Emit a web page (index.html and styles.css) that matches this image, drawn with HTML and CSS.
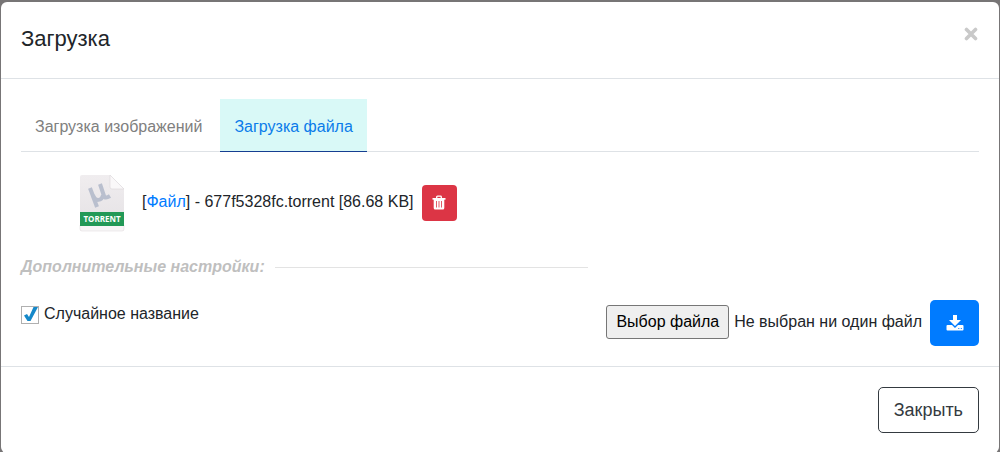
FILE: index.html
```html
<!DOCTYPE html>
<html lang="ru">
<head>
<meta charset="utf-8">
<title>Загрузка</title>
<link rel="stylesheet" href="styles.css">
</head>
<body>
<div class="modal" role="dialog" aria-labelledby="modal-title">
  <header class="modal-header">
    <h1 class="modal-title" id="modal-title">Загрузка</h1>
    <button class="dismiss" type="button" aria-label="Закрыть окно">
      <svg width="14" height="14" viewBox="0 0 14 14"><path d="M2.500 2.500l9 9M11.500 2.500l-9 9" fill="none" stroke="#c9c9c9" stroke-width="3.600" stroke-linecap="round"/></svg>
    </button>
  </header>
  <main class="modal-body">
    <nav class="tabs">
      <a class="tab" href="#images">Загрузка изображений</a>
      <a class="tab tab-active" href="#files" aria-current="page">Загрузка файла</a>
    </nav>
    <div class="file-row">
      <svg class="file-icon" width="48" height="60" viewBox="0 0 48 60" role="img" aria-label="torrent">
        <defs>
          <linearGradient id="paper" x1="0" y1="0" x2="0" y2="1"><stop offset="0" stop-color="#f0edef"/><stop offset="1" stop-color="#e4e1e4"/></linearGradient>
        </defs>
        <path d="M4 2h28l14 14v40q0 2-2 2H4q-2 0-2-2V4q0-2 2-2z" fill="url(#paper)"/>
        <path d="M2 52h44v4q0 2-2 2H4q-2 0-2-2z" fill="#f8f6f7" stroke="#e6e2e4" stroke-width=".7"/>
        <path d="M32 2l14 14H34q-2 0-2-2z" fill="#faf8f9" stroke="#dedadd" stroke-width=".7"/>
        <g fill="none" stroke="#b9bfce">
          <path d="M12 15l7 19" stroke-width="4"/>
          <path d="M15 22c2 7 9 6 10 0" stroke-width="4"/>
          <path d="M22 11l4 12q1 3 6 0" stroke-width="4"/>
        </g>
        <rect x="2" y="39" width="44" height="14" fill="#239957"/>
        <text class="file-icon-label" x="24" y="49" text-anchor="middle">TORRENT</text>
      </svg>
      <span class="file-name">[<a class="link" href="#file">Файл</a>] - 677f5328fc.torrent [86.68 KB]</span>
      <button class="button button-delete" type="button" aria-label="Удалить">
        <svg width="14" height="16" viewBox="0 0 14 16"><path d="M4.700 3V2q0-.8.8-.8h3q.8 0 .8.8v1" fill="none" stroke="#fff" stroke-width="1.300"/><path d="M.5 3h13v1.700H.5z" fill="#fff"/><path fill="#fff" fill-rule="evenodd" d="M1.700 4h10.600v9q0 1.500-1.500 1.500H3.200q-1.500 0-1.500-1.500zM4 6v6.500h.8V6zM6.600 6v6.500h.8V6zM9.200 6v6.500h.8V6z"/></svg>
      </button>
    </div>
    <div class="settings-heading"><h2 class="settings-title">Дополнительные настройки:</h2></div>
    <div class="controls">
      <label class="option"><input class="checkbox" type="checkbox" checked><span>Случайное название</span></label>
      <div class="upload">
        <input class="file-input" type="file" id="upload-file">
        <label class="file-button" for="upload-file">Выбор файла</label>
        <span class="file-status">Не выбран ни один файл</span>
        <button class="button button-upload" type="button" aria-label="Загрузить">
          <svg width="18" height="18" viewBox="0 0 18 18"><path fill="#fff" d="M7 1h4v5h4l-6 6-6-6h4z"/><path fill="#fff" fill-rule="evenodd" d="M1.500 11H6l3 3 3-3h4.500q1 0 1 1v3.500q0 1-1 1h-15q-1 0-1-1V12q0-1 1-1zM12.300 14v1h1v-1zM14.800 14v1h1v-1z"/></svg>
        </button>
      </div>
    </div>
  </main>
  <footer class="modal-footer">
    <button class="button button-close" type="button">Закрыть</button>
  </footer>
</div>
</body>
</html>
```
FILE: styles.css
```css
* { box-sizing: border-box; }

body {
  margin: 0;
  padding: 2px 1px 0;
  background: #777576;
  color: #212529;
  font: 16px/24px "Liberation Sans", Arial, sans-serif;
}

.modal {
  background: #fff;
  border-radius: 6px;
}

.modal-header {
  display: flex;
  align-items: flex-start;
  justify-content: space-between;
  padding: 20px 20px 22px;
  border-bottom: 1px solid #dee2e6;
}

.modal-title {
  margin: 0;
  font-size: 22px;
  line-height: 34px;
  font-weight: 400;
}

.dismiss {
  display: flex;
  margin: 5px 1px 0 0;
  padding: 0;
  border: 0;
  background: none;
}

.modal-body { padding: 20px; }

.tabs {
  display: flex;
  gap: 4px;
  border-bottom: 1px solid #dee2e6;
}

.tab {
  margin-bottom: -1px;
  padding: 16px 14px 12px;
  border-bottom: 1px solid transparent;
  color: #808080;
  text-decoration: none;
}

.tab-active {
  background: #d9f9f7;
  border-bottom-color: #153e91;
  color: #0b7cea;
}

.file-row {
  display: flex;
  align-items: center;
  padding: 21px 0 0 57px;
}

.file-icon { margin-right: 16px; }

.file-icon-label {
  fill: #fff;
  font: 700 8px "Open Sans", sans-serif;
}

.file-name { margin-right: 8px; padding-bottom: 2px; }

.link { color: #007bff; text-decoration: none; }

.button {
  display: inline-flex;
  align-items: center;
  justify-content: center;
  border: 0;
  border-radius: 5px;
  font: inherit;
}

.button-delete {
  width: 35px;
  height: 36px;
  padding: 0;
  border-radius: 4px;
  background: #dc3545;
}

.settings-heading {
  display: flex;
  align-items: center;
  gap: 10px;
  width: calc(60% - 8px);
  margin-top: 22px;
}

.settings-heading::after {
  content: "";
  flex: 1;
  border-top: 1px solid #e3e3e3;
}

.settings-title {
  margin: 0;
  color: #bfbfbf;
  font-size: 16px;
  line-height: 24px;
  font-style: italic;
}

.controls {
  display: flex;
  align-items: flex-start;
  justify-content: space-between;
  margin-top: 21px;
}

.option {
  display: flex;
  align-items: center;
  gap: 5px;
  padding-top: 2px;
}

.checkbox {
  appearance: none;
  width: 18px;
  height: 18px;
  margin: 2px 0 0;
  border: 1px solid #b0b0b0;
  background: #fff url("data:image/svg+xml,%3Csvg xmlns='http://www.w3.org/2000/svg' viewBox='0 0 16 16'%3E%3Cpath d='M2 8.500L5 7l2 3L11.500 0H16L8.500 14H5.500z' fill='%231588c9'/%3E%3C/svg%3E");
}

.upload { display: flex; align-items: center; }

.file-input {
  position: absolute;
  width: 1px;
  height: 1px;
  opacity: 0;
}

.file-button {
  margin: 0 5px 2px 0;
  padding: 4px 9px;
  border: 1px solid #767676;
  border-radius: 3px;
  background: #efefef;
  color: #000;
}

.file-status { margin: 0 8px 2px 0; }

.button-upload {
  width: 49px;
  height: 46px;
  padding: 0;
  background: #007bff;
}

.modal-footer {
  display: flex;
  justify-content: flex-end;
  padding: 20px;
  border-top: 1px solid #dee2e6;
}

.button-close {
  padding: 10px 15px;
  border: 1px solid #343a40;
  background: transparent;
  color: #343a40;
  font-size: 18px;
}
```
